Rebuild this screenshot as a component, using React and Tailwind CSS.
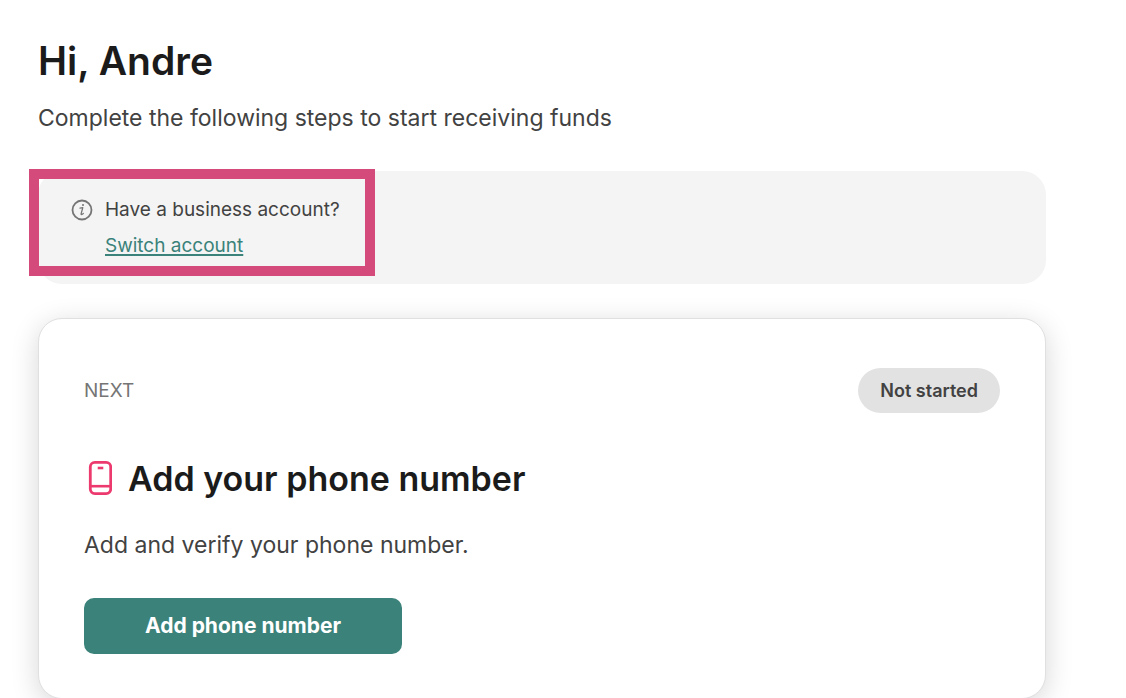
import React from 'react'

function InfoIcon() {
  return (
    <svg className="size-[22px] shrink-0 text-[#757575]" viewBox="0 0 22 22" fill="none" aria-hidden="true">
      <circle cx="11" cy="11" r="9.5" stroke="currentColor" strokeWidth="1.8" />
      <path d="M9 9.2L11.8 8.7L10.1 14.8C9.9 15.9 10.9 15.8 12.3 14.5" stroke="currentColor" strokeWidth="1.3" strokeLinecap="round" strokeLinejoin="round" />
      <circle cx="12" cy="6" r="1" fill="currentColor" />
    </svg>
  )
}

function PhoneIcon() {
  return (
    <svg className="h-[34px] w-6 shrink-0 text-[#ed3a6e]" viewBox="0 0 24 34" fill="none" stroke="currentColor" aria-hidden="true">
      <rect x="2.3" y="1.4" width="20.4" height="31.2" rx="4.5" strokeWidth="2.8" />
      <path d="M2.3 25.2H22.7" strokeWidth="2.6" />
      <path d="M9.7 7H15.3" strokeWidth="2.6" />
    </svg>
  )
}

function BusinessNotice() {
  return (
    <section className="relative rounded-3xl bg-[#f4f4f4] px-[33px] py-6 text-[19px]">
      <div className="flex items-start gap-3">
        <div className="flex h-[30px] items-center">
          <InfoIcon />
        </div>
        <div className="flex flex-col gap-[7px] leading-[29px]">
          <p>Have a business account?</p>
          <a href="#switch" className="text-[#3a827a] underline decoration-2 underline-offset-2">Switch account</a>
        </div>
      </div>
      <div className="pointer-events-none absolute -top-0.5 -left-[9px] h-[107px] w-[346px] border-10 border-[#d44a7a]" />
    </section>
  )
}

function StepCard() {
  return (
    <section className="rounded-3xl border border-[#e0e0e0] bg-white px-[45px] pt-[49px] pb-11 shadow-[0_6px_28px_rgba(0,0,0,0.16)]">
      <div className="flex items-center justify-between">
        <span className="text-[19px] leading-8 text-[#757575]">NEXT</span>
        <span className="flex h-[45px] items-center rounded-full bg-[#e2e2e2] px-[22px] text-lg font-semibold">Not started</span>
      </div>
      <div className="mt-[42px] flex items-center gap-4 pl-1">
        <PhoneIcon />
        <h2 className="pt-0.5 text-[34px] leading-[44px] font-semibold text-[#1b1b1b]">Add your phone number</h2>
      </div>
      <p className="mt-7 text-[23px] leading-8">Add and verify your phone number.</p>
      <button type="button" className="mt-[37px] h-14 w-full max-w-[318px] rounded-[10px] bg-[#3a827a] text-[21px] font-bold text-white">
        Add phone number
      </button>
    </section>
  )
}

export default function App() {
  return (
    <main className="bg-white pt-9 pr-20 pl-[38px] font-['Inter',sans-serif] text-[#424242]">
      <h1 className="text-[39px] leading-[50px] font-semibold text-[#1b1b1b]">Hi, Andre</h1>
      <p className="mt-4 text-[23px] leading-8">Complete the following steps to start receiving funds</p>
      <div className="mt-[37px] flex flex-col gap-[34px]">
        <BusinessNotice />
        <StepCard />
      </div>
    </main>
  )
}
